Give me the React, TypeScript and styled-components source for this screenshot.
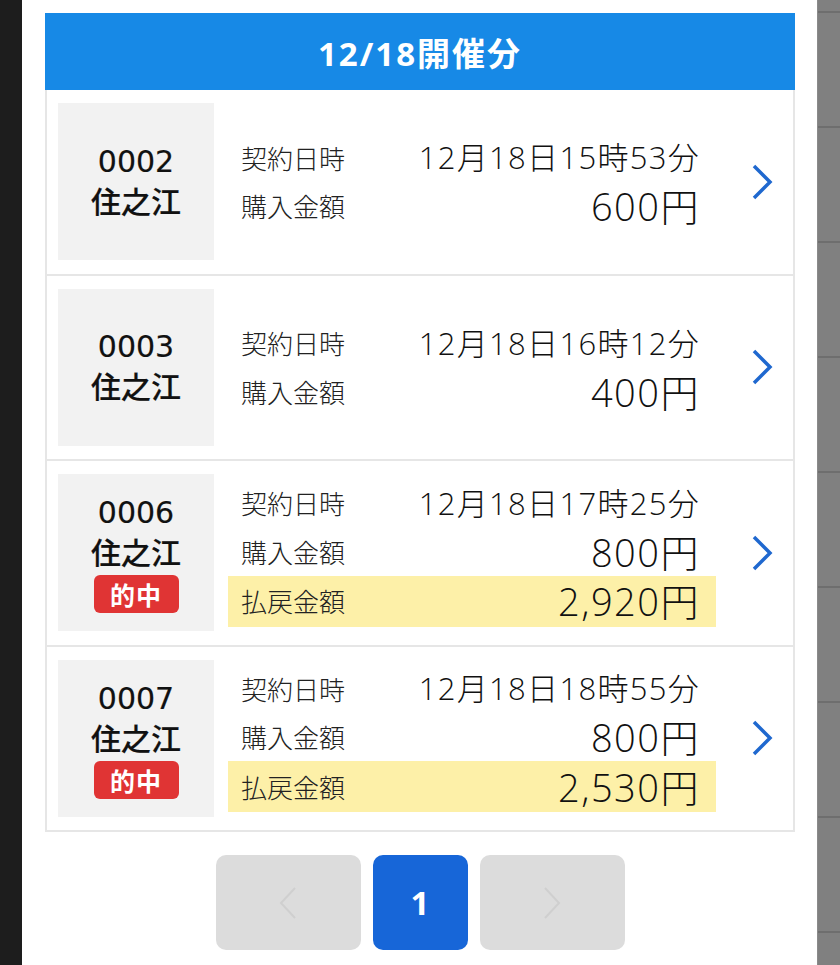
import styled, { createGlobalStyle } from "styled-components";

const GlobalStyle = createGlobalStyle`
  html, body {
    margin: 0;
    padding: 0;
    background: #ffffff;
  }
  body {
    font-family: "Noto Sans CJK JP", "Noto Sans", sans-serif;
    color: #1a1a1a;
  }
`;

const numberFont = `"Open Sans", "Noto Sans CJK JP", sans-serif`;
const venueFont = `"DejaVu Sans", "Noto Sans CJK JP", sans-serif`;

const Screen = styled.div`
  display: grid;
  grid-template-columns: 22px 1fr 23px;
  height: 965px;
  overflow: hidden;
`;

const LeftShade = styled.div`
  background: #1d1d1d;
`;

const RightShade = styled.div`
  background: repeating-linear-gradient(
    to bottom,
    #6e6e6e 0 2px,
    #808080 2px 115px
  );
  background-position: 0 11px;
  border-left: 1px solid #8a8a8a;
`;

const Panel = styled.div`
  background: #ffffff;
  padding: 13px 22px 0 23px;
`;

const Header = styled.div`
  height: 77px;
  background: #1789e6;
  color: #ffffff;
  display: flex;
  align-items: center;
  justify-content: center;
  font-family: ${numberFont};
  font-size: 33px;
  font-weight: 700;
  letter-spacing: 2px;
`;

const List = styled.div`
  border: 2px solid #e6e6e6;
  border-top: none;
`;

const Card = styled.div`
  height: 185.5px;
  box-sizing: border-box;
  border-bottom: 2px solid #e6e6e6;
  display: flex;
  align-items: center;
  padding: 0 0 0 11px;
  &:last-child {
    border-bottom: none;
    height: 183.5px;
  }
`;

const Venue = styled.div`
  width: 156px;
  height: 157px;
  background: #f2f2f2;
  display: flex;
  flex-direction: column;
  align-items: center;
  justify-content: center;
  color: #111;
`;

const VenueLine = styled.div`
  font-family: ${venueFont};
  font-size: 30px;
  font-weight: 500;
  line-height: 41px;
  -webkit-text-stroke: 0.2px #111;
`;

const Badge = styled.div`
  margin-top: 1px;
  width: 85px;
  height: 38px;
  border-radius: 6px;
  background: #e03434;
  color: #ffffff;
  font-size: 25px;
  font-weight: 700;
  display: flex;
  align-items: center;
  justify-content: center;
  letter-spacing: 1px;
`;

const Info = styled.div`
  width: 488px;
  margin-left: 14px;
  display: flex;
  flex-direction: column;
`;

const Row = styled.div<{ $hit?: boolean }>`
  height: ${(p) => (p.$hit ? "51px" : "48.5px")};
  display: flex;
  align-items: center;
  justify-content: space-between;
  padding: 0 16px 0 13px;
  background: ${(p) => (p.$hit ? "#fdf0a8" : "transparent")};
`;

const Label = styled.span`
  font-size: 26px;
  color: #222;
  font-weight: 300;
  line-height: 1;
`;

const Value = styled.span<{ $big?: boolean }>`
  font-family: ${numberFont};
  font-size: ${(p) => (p.$big ? "38px" : "31px")};
  font-weight: 300;
  color: #111;
  letter-spacing: ${(p) => (p.$big ? "1.5px" : "1.3px")};
  line-height: 1;
`;

const Chevron = styled.svg`
  margin-left: 34px;
  width: 24px;
  height: 38px;
  flex-shrink: 0;
`;

const Pager = styled.div`
  margin-top: 23px;
  display: flex;
  justify-content: center;
  gap: 12px;
`;

const PageButton = styled.div<{ $active?: boolean; $wide?: boolean }>`
  width: ${(p) => (p.$wide ? "145px" : "95px")};
  height: 95px;
  border-radius: 10px;
  background: ${(p) => (p.$active ? "#1766d8" : "#dcdcdc")};
  color: #ffffff;
  display: flex;
  align-items: center;
  justify-content: center;
  font-family: ${numberFont};
  font-size: 33px;
  font-weight: 700;
`;

const PagerArrow = styled.svg`
  width: 18px;
  height: 34px;
`;

type Entry = {
  no: string;
  venue: string;
  date: string;
  amount: string;
  payout?: string;
};

const entries: Entry[] = [
  { no: "0002", venue: "住之江", date: "12月18日15時53分", amount: "600円" },
  { no: "0003", venue: "住之江", date: "12月18日16時12分", amount: "400円" },
  { no: "0006", venue: "住之江", date: "12月18日17時25分", amount: "800円", payout: "2,920円" },
  { no: "0007", venue: "住之江", date: "12月18日18時55分", amount: "800円", payout: "2,530円" },
];

export default function App() {
  return (
    <>
      <GlobalStyle />
      <Screen>
        <LeftShade />
        <Panel>
          <Header>12/18開催分</Header>
          <List>
            {entries.map((e) => (
              <Card key={e.no}>
                <Venue>
                  <VenueLine>{e.no}</VenueLine>
                  <VenueLine>{e.venue}</VenueLine>
                  {e.payout && <Badge>的中</Badge>}
                </Venue>
                <Info>
                  <Row>
                    <Label>契約日時</Label>
                    <Value>{e.date}</Value>
                  </Row>
                  <Row>
                    <Label>購入金額</Label>
                    <Value $big>{e.amount}</Value>
                  </Row>
                  {e.payout && (
                    <Row $hit>
                      <Label>払戻金額</Label>
                      <Value $big>{e.payout}</Value>
                    </Row>
                  )}
                </Info>
                <Chevron viewBox="0 0 24 38">
                  <polyline points="4,3 20,19 4,35" fill="none" stroke="#1f68cf" strokeWidth={3.5} />
                </Chevron>
              </Card>
            ))}
          </List>
          <Pager>
            <PageButton $wide>
              <PagerArrow viewBox="0 0 18 34">
                <polyline points="16,2 2,17 16,32" fill="none" stroke="#cfcfcf" strokeWidth={2} />
              </PagerArrow>
            </PageButton>
            <PageButton $active>1</PageButton>
            <PageButton $wide>
              <PagerArrow viewBox="0 0 18 34">
                <polyline points="2,2 16,17 2,32" fill="none" stroke="#cfcfcf" strokeWidth={2} />
              </PagerArrow>
            </PageButton>
          </Pager>
        </Panel>
        <RightShade />
      </Screen>
    </>
  );
}
